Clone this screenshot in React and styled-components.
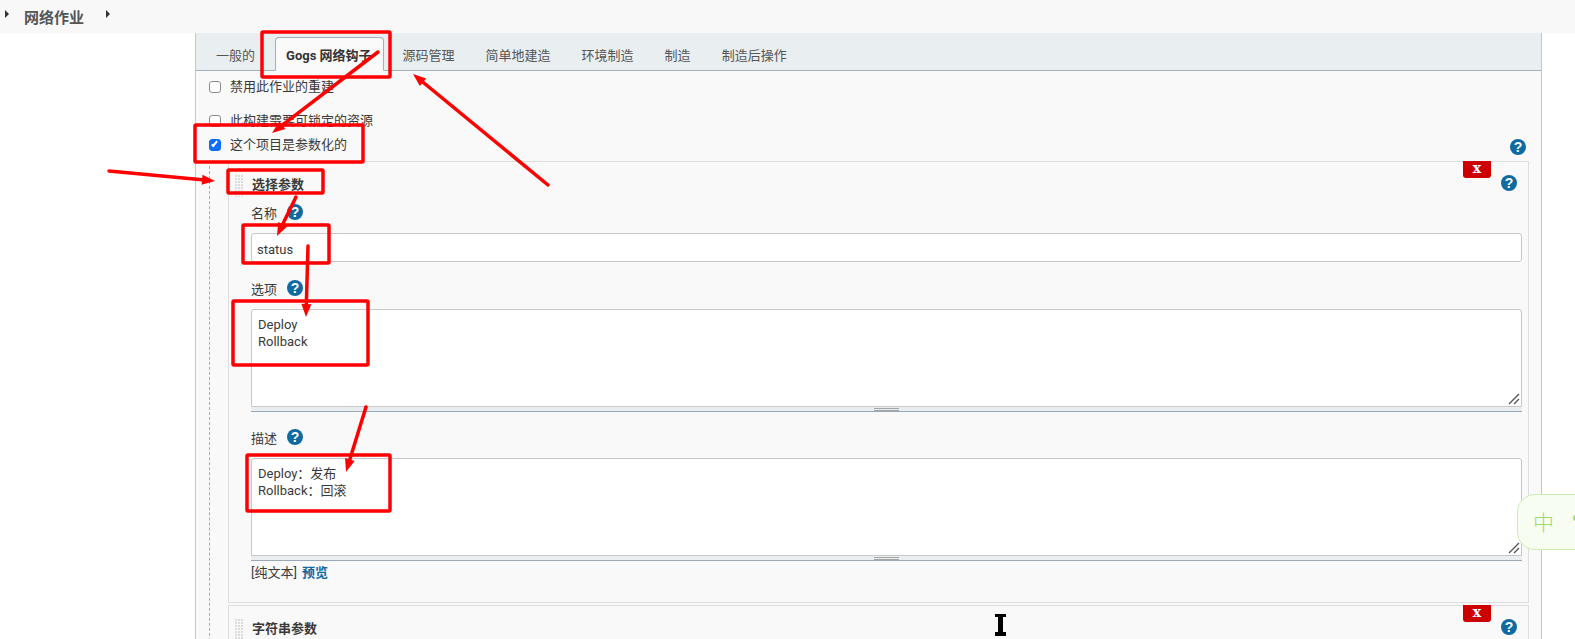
import React from 'react'
import styled, { createGlobalStyle } from 'styled-components';

const FONT = 'Roboto, "Noto Sans CJK SC", sans-serif';
const BLUE = '#0f6aa1';
const RED = '#ff0000';

const tabs = ['一般的', 'Gogs 网络钩子', '源码管理', '简单地建造', '环境制造', '制造', '制造后操作'];

const boxes = [
  [262, 32, 128, 45],
  [195, 125, 168, 37],
  [228, 170, 95, 23],
  [243, 225, 86, 38],
  [233, 301, 135, 64],
  [247, 455, 143, 56],
];

const arrows = [
  [378, 52, 272, 133],
  [548, 185, 413, 74],
  [109, 171, 215, 181],
  [296, 197, 277, 236],
  [308, 246, 306, 317],
  [366, 407, 346, 472],
];

const App = () => {
  return (
    <Page>
      <GlobalStyle />
      <TopBar>
        <Caret />
        <JobName>网络作业</JobName>
        <Caret />
      </TopBar>
      <Panel>
        <TabBar>
          {tabs.map((t, i) => (
            <Tab key={t} $active={i === 1}>{t}</Tab>
          ))}
        </TabBar>
        <CheckRow $top={9}>
          <Check type="checkbox" readOnly />
          <CheckLabel>禁用此作业的重建</CheckLabel>
        </CheckRow>
        <CheckRow $top={20}>
          <Check type="checkbox" readOnly />
          <CheckLabel>此构建需要可锁定的资源</CheckLabel>
        </CheckRow>
        <CheckRow $top={10}>
          <Check type="checkbox" checked readOnly />
          <CheckLabel>这个项目是参数化的</CheckLabel>
          <RowHelp>?</RowHelp>
        </CheckRow>
        <ParamList>
          <Block>
            <RemoveButton>x</RemoveButton>
            <BlockHeader>
              <Grip />
              <BlockTitle>选择参数</BlockTitle>
              <BlockHelp>?</BlockHelp>
            </BlockHeader>
            <FieldLabel>名称<Help>?</Help></FieldLabel>
            <TextField>status</TextField>
            <FieldLabel $top={18}>选项<Help>?</Help></FieldLabel>
            <TextBox>
              Deploy{'\n'}Rollback
              <ResizeMark />
            </TextBox>
            <DragBar><DragLines /></DragBar>
            <FieldLabel $top={17}>描述<Help>?</Help></FieldLabel>
            <TextBox>
              Deploy：发布{'\n'}Rollback：回滚
              <ResizeMark />
            </TextBox>
            <DragBar><DragLines /></DragBar>
            <PreviewLine>[纯文本]<PreviewLink>预览</PreviewLink></PreviewLine>
          </Block>
          <Block>
            <RemoveButton>x</RemoveButton>
            <BlockHeader>
              <Grip />
              <BlockTitle>字符串参数</BlockTitle>
              <BlockHelp>?</BlockHelp>
            </BlockHeader>
          </Block>
        </ParamList>
      </Panel>

      <ImePill>
        <ImeChar>中</ImeChar>
        <ImeDot />
      </ImePill>

      <Overlay viewBox="0 0 1575 639">
        {boxes.map(([x, y, w, h]) => (
          <rect key={x} x={x} y={y} width={w} height={h} rx="1" fill="none" stroke={RED} strokeWidth="3.5" />
        ))}
        {arrows.map(a => <Arrow key={a[0]} from={a} />)}
        <path d="M995 614h11v3h-3v15h3v4h-11v-4h3v-15h-3z" fill="#000" />
      </Overlay>
    </Page>
  )
}

// red hand-drawn arrow, shaft plus narrow head
const Arrow = ({ from }) => {
  const [x1, y1, x2, y2] = from;
  const len = Math.hypot(x2 - x1, y2 - y1);
  const ux = (x2 - x1) / len;
  const uy = (y2 - y1) / len;
  const bx = x2 - ux * 13;
  const by = y2 - uy * 13;
  const head = `${x2},${y2} ${bx - uy * 5},${by + ux * 5} ${bx + uy * 5},${by - ux * 5}`;
  return (
    <g>
      <line x1={x1} y1={y1} x2={bx} y2={by} stroke={RED} strokeWidth="3.5" strokeLinecap="round" />
      <polygon points={head} fill={RED} />
    </g>
  );
};

const ResizeMark = () => (
  <ResizeSvg viewBox="0 0 12 12">
    <path d="M1 11L11 1M6 11L11 6" stroke="#555" strokeWidth="1.4" />
  </ResizeSvg>
);

export default App;

const GlobalStyle = createGlobalStyle`
  html, body {
    margin: 0;
    padding: 0;
    background: #fff;
    overflow: hidden;
  }
`;

const Page = styled.div`
  position: relative;
  width: 1575px;
  height: 639px;
  overflow: hidden;
  font-family: ${FONT};
  font-size: 13px;
  color: #3a3a3a;
`;

const TopBar = styled.div`
  height: 33px;
  display: flex;
  align-items: center;
  padding-left: 5px;
  background-color: #f8f8f8;
`;

const Caret = styled.span`
  width: 0;
  height: 0;
  margin-top: -5px;
  border-left: 4px solid #333;
  border-top: 4px solid transparent;
  border-bottom: 4px solid transparent;
`;

const JobName = styled.div`
  width: 68px;
  margin-left: 15px;
  margin-right: 14px;
  font-size: 15px;
  font-weight: 700;
  color: #555;
  white-space: nowrap;
`;

const Panel = styled.div`
  width: 1345px;
  height: 606px;
  margin-left: 195px;
  background-color: #f9f9f9;
  border-left: 1px solid #c6c6c6;
  border-right: 1px solid #c6c6c6;
`;

const TabBar = styled.div`
  height: 37px;
  display: flex;
  align-items: flex-end;
  padding-left: 9px;
  background-color: #e9eef1;
  border-bottom: 1px solid #a3afb9;
`;

const Tab = styled.div`
  height: 34px;
  box-sizing: border-box;
  margin-right: ${p => (p.$active ? 8 : 9)}px;
  margin-bottom: -1px;
  padding: 0 ${p => (p.$active ? '11px 0 10px' : '10px')};
  display: flex;
  align-items: center;
  color: ${p => (p.$active ? '#333' : '#555')};
  font-weight: ${p => (p.$active ? 700 : 400)};
  white-space: nowrap;
  border: 1px solid ${p => (p.$active ? '#a3afb9' : 'transparent')};
  border-bottom: 1px solid ${p => (p.$active ? '#f9f9f9' : 'transparent')};
  border-radius: 4px 4px 0 0;
  background-color: ${p => (p.$active ? '#fafafa' : 'transparent')};
`;

const CheckRow = styled.div`
  height: 14px;
  margin-top: ${p => p.$top}px;
  padding-left: 13px;
  padding-right: 15px;
  display: flex;
  align-items: center;
`;

const Check = styled.input`
  appearance: none;
  position: relative;
  box-sizing: border-box;
  width: 12px;
  height: 12px;
  margin: -1px 0 0;
  border: 1px solid ${p => (p.checked ? '#0d6efd' : '#8c8c8c')};
  border-radius: 3px;
  background-color: ${p => (p.checked ? '#0d6efd' : '#fff')};

  &:checked::after {
    content: '';
    position: absolute;
    left: 3px;
    top: 0;
    width: 3px;
    height: 7px;
    border: solid #fff;
    border-width: 0 2px 2px 0;
    box-sizing: border-box;
    transform: rotate(40deg);
  }
`;

const CheckLabel = styled.label`
  flex: 1;
  margin-left: 9px;
  line-height: 14px;
  white-space: nowrap;
`;

const Help = styled.span`
  width: 16px;
  height: 16px;
  margin-left: 10px;
  margin-bottom: 4px;
  border-radius: 50%;
  display: inline-flex;
  align-items: center;
  justify-content: center;
  background-color: ${BLUE};
  color: #fff;
  font-family: "Liberation Sans", sans-serif;
  font-size: 14px;
  font-weight: 700;
  line-height: 16px;
`;

const RowHelp = styled(Help)`
  margin: 3px 0 0;
`;

const ParamList = styled.div`
  margin: 9px 12px 0 13px;
  padding-left: 18px;
  border-left: 1px dashed #aaa;
  height: 500px;
`;

const Block = styled.div`
  position: relative;
  margin-bottom: 2px;
  padding: 0 6px 21px 22px;
  background-color: #f9f9f9;
  border: 1px solid #ddd;
`;

const RemoveButton = styled.div`
  position: absolute;
  top: -1px;
  right: 37px;
  width: 28px;
  height: 17px;
  border-radius: 0 0 3px 3px;
  background-color: #cc0000;
  color: #fff;
  font-family: "DejaVu Serif", serif;
  font-size: 14px;
  font-weight: 700;
  line-height: 15px;
  text-align: center;
`;

const BlockHeader = styled.div`
  height: 23px;
  margin: 12px 5px 0 -17px;
  display: flex;
  align-items: flex-start;
`;

const Grip = styled.div`
  width: 10px;
  height: 23px;
  background-color: #dcdcdc;
  background-image: linear-gradient(#f9f9f9 1px, transparent 1px), linear-gradient(90deg, #f9f9f9 1px, transparent 1px);
  background-size: 3px 3px;
`;

const BlockTitle = styled.div`
  flex: 1;
  margin-left: 8px;
  font-weight: 700;
  line-height: 22px;
`;

const BlockHelp = styled(Help)`
  margin: 1px 0 0;
`;

const FieldLabel = styled.div`
  height: 20px;
  margin-top: ${p => p.$top ?? 7}px;
  margin-bottom: 9px;
  display: flex;
  align-items: center;
  line-height: 20px;
`;

const TextField = styled.div`
  height: 29px;
  box-sizing: border-box;
  padding-left: 5px;
  background-color: #fff;
  border: 1px solid #c8c8c8;
  border-radius: 3px;
  line-height: 31px;
`;

const TextBox = styled.div`
  position: relative;
  height: 98px;
  box-sizing: border-box;
  padding: 6px;
  background-color: #fff;
  border: 1px solid #c8c8c8;
  border-radius: 3px 3px 0 0;
  line-height: 17px;
  white-space: pre-line;
`;

const ResizeSvg = styled.svg`
  position: absolute;
  right: 1px;
  bottom: 1px;
  width: 12px;
  height: 12px;
`;

const DragBar = styled.div`
  height: 4px;
  display: flex;
  justify-content: center;
  background-color: #e9eef1;
  border-bottom: 1px solid #9aa9b5;
`;

const DragLines = styled.div`
  width: 25px;
  height: 1px;
  margin-top: 1px;
  border-top: 1px solid #a5a5a5;
  border-bottom: 1px solid #a5a5a5;
`;

const PreviewLine = styled.div`
  height: 20px;
  line-height: 24px;
`;

const PreviewLink = styled.span`
  margin-left: 5px;
  color: ${BLUE};
  font-weight: 700;
`;

const ImePill = styled.div`
  position: absolute;
  left: 1517px;
  top: 494px;
  width: 80px;
  height: 56px;
  box-sizing: border-box;
  border: 1px solid #cdeeb0;
  border-radius: 18px;
  background-color: #f8fdf2;
  color: #a2d96f;
`;

const ImeChar = styled.span`
  position: absolute;
  left: 15px;
  top: 14px;
  font-size: 21px;
  line-height: 28px;
  font-weight: 300;
`;

const ImeDot = styled.span`
  position: absolute;
  left: 55px;
  top: 20px;
  width: 6px;
  height: 6px;
  border-radius: 50%;
  background-color: #a2d96f;
`;

const Overlay = styled.svg`
  position: absolute;
  left: 0;
  top: 0;
  width: 1575px;
  height: 639px;
  pointer-events: none;
`;
